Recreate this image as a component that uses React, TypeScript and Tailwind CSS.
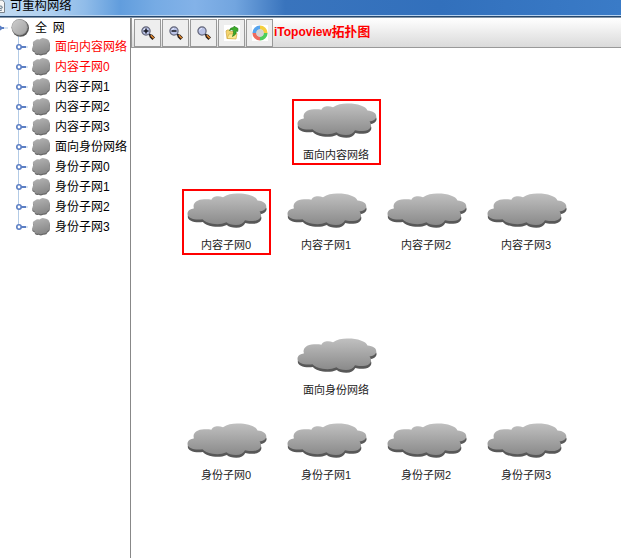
import React from 'react';

const FONT = "font-['Liberation_Sans','Noto_Sans_CJK_SC',sans-serif]";

const CLOUD =
  'M7 15.500C5 10.500 10 6.300 17 6.300C20 6.200 22.500 6.300 24.500 6.800C25 3.500 31 2 36 4.200C40 1.500 45 0.500 50 0.500C60 0.300 69 3 70.500 7.500C76 7.800 79.500 10.500 79.300 13.500C79 16.500 76 18 72.500 18.500C76.500 23 72.500 28 66 28C63 28.300 60 28 58 27.300C56.500 30.500 53.500 32 49 32C44.500 32 41.500 31 39.500 29.300C35 31.300 30 31.500 25.500 30.700C20.500 30 17.500 28.700 15.500 26.300C7 27.300 0.500 25 0.500 21C0.500 17.500 3.500 15.700 7 15.500Z';

function Cloud() {
  return (
    <svg width="80" height="36" viewBox="0 0 80 36" className="block">
      <defs>
        <linearGradient id="cloudFill" x1="0" y1="0" x2="0" y2="1">
          <stop offset="0" stopColor="#c0c0c0" />
          <stop offset="1" stopColor="#8a8a8a" />
        </linearGradient>
      </defs>
      <path d={CLOUD} fill="#585858" transform="translate(0.3 2.700)" />
      <path d={CLOUD} fill="url(#cloudFill)" />
    </svg>
  );
}

type NodeItem = { x: number; y: number; label: string; selected?: boolean };

const nodes: NodeItem[] = [
  { x: 292, y: 99, label: '面向内容网络', selected: true },
  { x: 182, y: 189, label: '内容子网0', selected: true },
  { x: 282, y: 189, label: '内容子网1' },
  { x: 382, y: 189, label: '内容子网2' },
  { x: 482, y: 189, label: '内容子网3' },
  { x: 292, y: 334, label: '面向身份网络' },
  { x: 182, y: 419, label: '身份子网0' },
  { x: 282, y: 419, label: '身份子网1' },
  { x: 382, y: 419, label: '身份子网2' },
  { x: 482, y: 419, label: '身份子网3' },
];

const tree = [
  { label: '面向内容网络', red: true },
  { label: '内容子网0', red: true },
  { label: '内容子网1' },
  { label: '内容子网2' },
  { label: '内容子网3' },
  { label: '面向身份网络' },
  { label: '身份子网0' },
  { label: '身份子网1' },
  { label: '身份子网2' },
  { label: '身份子网3' },
];

const BLOB =
  'M33.500 8Q31.500 5 35 3.500Q37 1.500 39.500 2.500Q42 0 45 1.500Q49 2 49.300 5Q50.300 7 49.500 9.500Q50 13 47.500 14Q46.500 17 43 16.500Q40.500 18 38.500 16.500Q34.500 17.500 34.500 14Q31 13 32.500 10.500Q32.500 9 33.500 8Z';

function TreeRow({ label, red, last }: { label: string; red?: boolean; last: boolean }) {
  return (
    <div className="flex h-5 items-center">
      <svg width="55" height="20" viewBox="0 0 55 20" className="shrink-0">
        <defs>
          <linearGradient id="blobFill" x1="0" y1="0" x2="0.3" y2="1">
            <stop offset="0" stopColor="#b6b6b6" />
            <stop offset="1" stopColor="#898989" />
          </linearGradient>
        </defs>
        <path d={last ? 'M18.500 0V10' : 'M18.500 0V20'} stroke="#b3cbe6" />
        <path d="M21 10H26" stroke="#5c7fc4" strokeWidth="2" />
        <path d="M26 10H28" stroke="#b3cbe6" />
        <circle cx="19" cy="10" r="2.200" fill="#fff" stroke="#5c7fc4" strokeWidth="1.600" />
        <path d={BLOB} fill="#666" transform="translate(0.2 1.200)" />
        <path d={BLOB} fill="url(#blobFill)" />
      </svg>
      <span className={red ? 'text-[#ff0000]' : 'text-black'}>{label}</span>
    </div>
  );
}

function Magnifier({ kind }: { kind: 'plus' | 'minus' | 'none' }) {
  return (
    <svg width="14" height="14" viewBox="0 0 14 14">
      <path d="M8 8L10 10" stroke="#1e1b20" strokeWidth="2" />
      <path d="M9.500 9.500L12.700 12.700" stroke="#251810" strokeWidth="3.600" />
      <path d="M9.800 9.300L12.700 12.200" stroke="#e58b32" strokeWidth="1.600" />
      <circle cx="5" cy="5" r="4.100" fill="#b9c2e6" stroke="#626579" strokeWidth="1.200" />
      <path d="M2.500 4.500Q3 2.500 5 2.300" stroke="#e5eaff" fill="none" />
      {kind !== 'none' && <path d="M2.500 5H7.500" stroke="#14141d" strokeWidth="1.500" />}
      {kind === 'plus' && <path d="M5 2.500V7.500" stroke="#14141d" strokeWidth="1.500" />}
    </svg>
  );
}

function FolderArrow() {
  return (
    <svg width="16" height="16" viewBox="0 0 16 16">
      <rect width="16" height="16" fill="#fff" />
      <path d="M2 6L3 5L5.500 5L6.500 6.500L10 6.500L9 13.500L3 13.500Z" fill="#f3d46f" stroke="#d0a640" strokeWidth=".7" />
      <path d="M3 13.500L5 9L13 8.500L12 14Z" fill="#fbe994" stroke="#d6ae42" strokeWidth=".7" />
      <path d="M5.500 5.500Q6 2.500 9.500 2.500L10 1.300L14 3.500L13.700 6.500L12.500 5.500Q12.500 10 8.500 11.500Q10.500 7.500 9 5Q7.500 4.300 5.500 5.500Z" fill="#3cae2a" stroke="#267b1c" strokeWidth=".7" />
    </svg>
  );
}

function ColorRing() {
  return (
    <svg width="16" height="16" viewBox="0 0 16 16">
      <rect width="16" height="16" fill="#fff" />
      <g fill="none" strokeWidth="4.200">
        <path d="M8 2.500A5.500 5.500 0 0 1 13.500 8" stroke="#f4cf3e" />
        <path d="M13.500 8A5.500 5.500 0 0 1 8 13.500" stroke="#4cce5d" />
        <path d="M8 13.500A5.500 5.500 0 0 1 2.500 8" stroke="#ef6a5c" />
        <path d="M2.500 8A5.500 5.500 0 0 1 8 2.500" stroke="#56a4ee" />
      </g>
      <circle cx="8" cy="8" r="3.800" fill="#d3d3d3" />
    </svg>
  );
}

function ToolButton({ children }: { children: React.ReactNode }) {
  return (
    <div className="flex h-[28px] w-[27px] shrink-0 items-center justify-center border border-[#999] bg-[#eee]">
      {children}
    </div>
  );
}

export default function App() {
  return (
    <div className={`flex h-[558px] w-[621px] flex-col overflow-hidden bg-white text-[12px] ${FONT}`}>
      <header className="flex h-[18px] shrink-0 flex-col">
        <div className="flex h-[15px] bg-[linear-gradient(90deg,#c1daf1_0,#b0d0ef_50px,#90bce9_85px,#619ddd_120px,#76abe4_155px,#83b2e8_195px,#72a5df_235px,#3974bd_285px,#3270bc_440px,#3a7bc7_621px)]">
          <svg width="10" height="15" viewBox="0 0 10 15" className="shrink-0">
            <path d="M0 0H2.500L4.500 2.500V12.500H0" fill="#f5f5f5" stroke="#7a838c" />
            <path d="M0 6Q2.500 5.500 2.300 8L0 8.500M0 10.500L2 10" fill="none" stroke="#637788" />
          </svg>
          <span className="-mt-px text-[12.300px] leading-[14px] whitespace-nowrap text-black">可重构网络</span>
        </div>
        <div className="h-px bg-[#b8d3ef]" />
        <div className="h-px bg-[#25476d]" />
        <div className="h-px bg-[#8797a8]" />
      </header>
      <div className="flex min-h-0 flex-1">
        <aside className="w-[131px] shrink-0 border-r border-[#888] whitespace-nowrap">
          <div className="flex h-[19px] items-center">
            <svg width="35" height="19" viewBox="0 0 35 19" className="shrink-0">
              <defs>
                <linearGradient id="discFill" x1="0" y1="0" x2="1" y2="1">
                  <stop offset="0" stopColor="#cecece" />
                  <stop offset="1" stopColor="#a2a2a2" />
                </linearGradient>
              </defs>
              <path d="M0 10H4" stroke="#5c7fc4" strokeWidth="2" />
              <path d="M0 7.500Q2 8 2 10T0 12.500" fill="#5c7fc4" />
              <path d="M4 10H8" stroke="#b3cbe6" />
              <path d="M18.500 17V19" stroke="#b3cbe6" />
              <circle cx="20.400" cy="10.100" r="8.600" fill="#555" />
              <circle cx="19.600" cy="9.300" r="8.200" fill="#9b9b9b" />
              <circle cx="19.400" cy="9.100" r="7.400" fill="url(#discFill)" />
            </svg>
            <span className="pt-px whitespace-pre [word-spacing:2.500px]">全 网</span>
          </div>
          {tree.map((item, i) => (
            <TreeRow key={item.label} label={item.label} red={item.red} last={i === tree.length - 1} />
          ))}
        </aside>
        <main className="flex min-w-0 flex-1 flex-col">
          <div className="flex h-[30px] shrink-0 items-center gap-px border-b border-l border-[#999] bg-linear-to-b from-white to-[#dadada] pl-[2px]">
            <ToolButton><Magnifier kind="plus" /></ToolButton>
            <ToolButton><Magnifier kind="minus" /></ToolButton>
            <ToolButton><Magnifier kind="none" /></ToolButton>
            <ToolButton><FolderArrow /></ToolButton>
            <ToolButton><ColorRing /></ToolButton>
            <span className="text-[12px] leading-none font-bold whitespace-nowrap text-[#ff0000]">
              iTopoview<span className="text-[12.800px]">拓扑图</span>
            </span>
          </div>
          <div className="relative flex-1">
            {nodes.map((n) => (
              <div
                key={n.label}
                className={`absolute flex h-[66px] w-[89px] flex-col border-2 pt-[2px] pl-[3px] ${n.selected ? 'border-[#ff0000]' : 'border-transparent'}`}
                style={{ left: n.x - 131, top: n.y - 48 }}
              >
                <Cloud />
                <span className="mt-[9px] -ml-[3px] pr-px text-center text-[11px] leading-[14px] whitespace-nowrap text-[#222]">
                  {n.label}
                </span>
              </div>
            ))}
          </div>
        </main>
      </div>
    </div>
  );
}
